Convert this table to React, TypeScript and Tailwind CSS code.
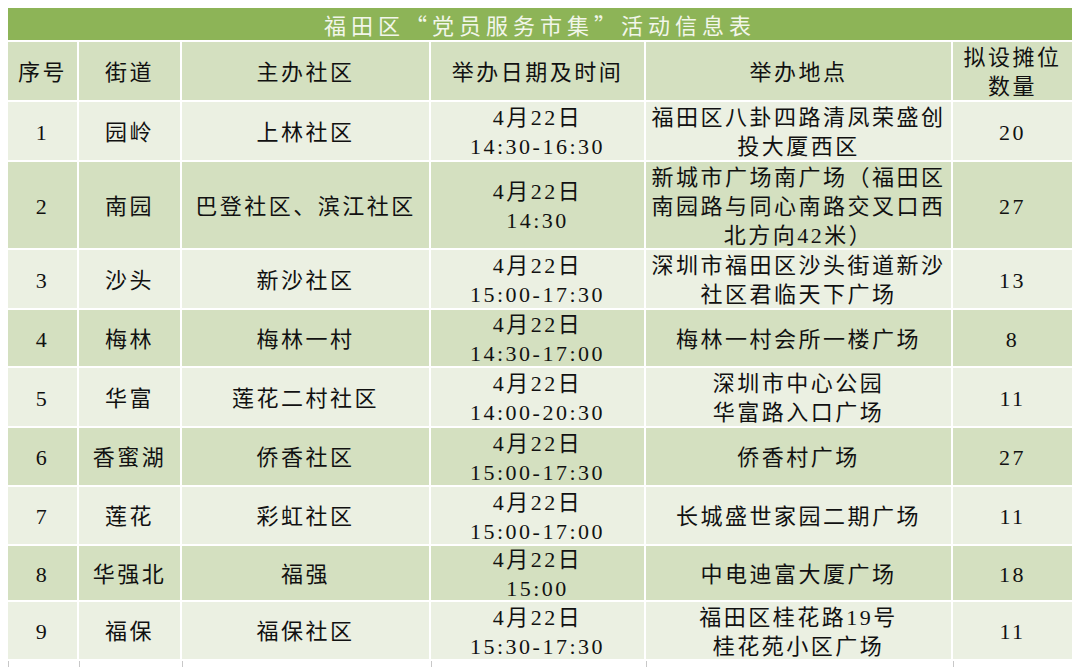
import React from "react";

type Row = {
  no: string;
  street: string;
  host: string;
  time: string[];
  place: string[];
  count: string;
};

const ROWS: Row[] = [
  { no: "1", street: "园岭", host: "上林社区", time: ["4月22日", "14:30-16:30"], place: ["福田区八卦四路清凤荣盛创", "投大厦西区"], count: "20" },
  { no: "2", street: "南园", host: "巴登社区、滨江社区", time: ["4月22日", "14:30"], place: ["新城市广场南广场（福田区", "南园路与同心南路交叉口西", "北方向42米）"], count: "27" },
  { no: "3", street: "沙头", host: "新沙社区", time: ["4月22日", "15:00-17:30"], place: ["深圳市福田区沙头街道新沙", "社区君临天下广场"], count: "13" },
  { no: "4", street: "梅林", host: "梅林一村", time: ["4月22日", "14:30-17:00"], place: ["梅林一村会所一楼广场"], count: "8" },
  { no: "5", street: "华富", host: "莲花二村社区", time: ["4月22日", "14:00-20:30"], place: ["深圳市中心公园", "华富路入口广场"], count: "11" },
  { no: "6", street: "香蜜湖", host: "侨香社区", time: ["4月22日", "15:00-17:30"], place: ["侨香村广场"], count: "27" },
  { no: "7", street: "莲花", host: "彩虹社区", time: ["4月22日", "15:00-17:00"], place: ["长城盛世家园二期广场"], count: "11" },
  { no: "8", street: "华强北", host: "福强", time: ["4月22日", "15:00"], place: ["中电迪富大厦广场"], count: "18" },
  { no: "9", street: "福保", host: "福保社区", time: ["4月22日", "15:30-17:30"], place: ["福田区桂花路19号", "桂花苑小区广场"], count: "11" },
];

function Cell({ lines, dark }: { lines: string[]; dark: boolean }) {
  return (
    <div
      className={`flex flex-col items-center justify-center pt-[2px] text-center leading-[29px] ${
        dark ? "bg-[#d4e0c0]" : "bg-[#ebf0e2]"
      }`}
    >
      {lines.map((l, i) => (
        <span key={i} className="whitespace-nowrap">
          {l}
        </span>
      ))}
    </div>
  );
}

export default function App() {
  const headers = [["序号"], ["街道"], ["主办社区"], ["举办日期及时间"], ["举办地点"], ["拟设摊位", "数量"]];

  return (
    <div className="h-[667px] w-[1080px] overflow-hidden bg-white px-[8px] pt-[8px]">
      <div
        className="grid grid-cols-[69px_101px_247px_213px_305px_119px] grid-rows-[32px_58px_58px_86px_58px_56px_58px_57px_57px_54px_57px_20px] gap-[2px] bg-white text-[22px] tracking-[2.5px] text-[#111111]"
        style={{ fontFamily: '"Liberation Serif", "Noto Sans CJK SC", serif' }}
      >
        {/* Title */}
        <div
          className="col-span-6 flex items-center justify-center bg-[#8db457] text-[22px] tracking-[5px] text-[#f2f6ea]"
          style={{ fontFamily: '"Noto Sans CJK SC", sans-serif' }}
        >
          福田区“党员服务市集”活动信息表
        </div>

        {/* Header */}
        {headers.map((h, i) => (
          <Cell key={`h-${i}`} lines={h} dark />
        ))}

        {/* Body */}
        {ROWS.map((r, idx) => {
          const dark = idx % 2 === 1;
          return (
            <React.Fragment key={r.no}>
              <Cell lines={[r.no]} dark={dark} />
              <Cell lines={[r.street]} dark={dark} />
              <Cell lines={[r.host]} dark={dark} />
              <Cell lines={r.time} dark={dark} />
              <Cell lines={r.place} dark={dark} />
              <Cell lines={[r.count]} dark={dark} />
            </React.Fragment>
          );
        })}

        {/* cut-off next row */}
        {[0, 1, 2, 3, 4, 5].map((i) => (
          <div key={`t-${i}`} className="border-l border-[#c8c8c8] bg-white" />
        ))}
      </div>
    </div>
  );
}
